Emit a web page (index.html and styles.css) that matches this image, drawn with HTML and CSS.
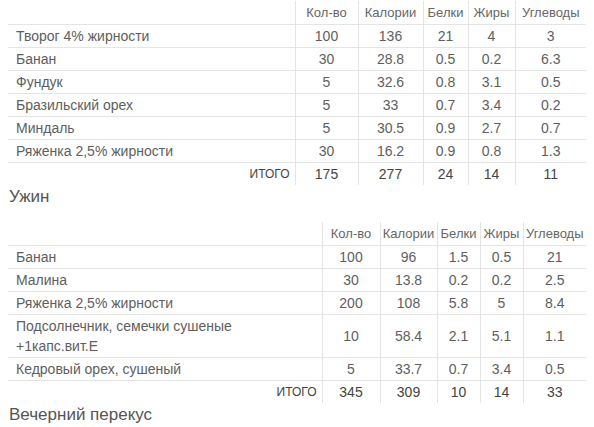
FILE: index.html
```html
<!DOCTYPE html>
<html lang="ru">
<head>
<meta charset="utf-8">
<title>Рацион</title>
<link rel="stylesheet" href="styles.css">
</head>
<body>
<table class="food t1">
  <colgroup>
    <col class="c-name"><col class="c-qty"><col class="c-cal"><col class="c-pro"><col class="c-fat"><col class="c-carb">
  </colgroup>
  <thead>
    <tr><th></th><th>Кол-во</th><th>Калории</th><th>Белки</th><th>Жиры</th><th>Углеводы</th></tr>
  </thead>
  <tbody>
    <tr><td>Творог 4% жирности</td><td>100</td><td>136</td><td>21</td><td>4</td><td>3</td></tr>
    <tr><td>Банан</td><td>30</td><td>28.8</td><td>0.5</td><td>0.2</td><td>6.3</td></tr>
    <tr><td>Фундук</td><td>5</td><td>32.6</td><td>0.8</td><td>3.1</td><td>0.5</td></tr>
    <tr><td>Бразильский орех</td><td>5</td><td>33</td><td>0.7</td><td>3.4</td><td>0.2</td></tr>
    <tr><td>Миндаль</td><td>5</td><td>30.5</td><td>0.9</td><td>2.7</td><td>0.7</td></tr>
    <tr><td>Ряженка 2,5% жирности</td><td>30</td><td>16.2</td><td>0.9</td><td>0.8</td><td>1.3</td></tr>
    <tr class="total"><td>ИТОГО</td><td>175</td><td>277</td><td>24</td><td>14</td><td>11</td></tr>
  </tbody>
</table>
<h3 class="meal">Ужин</h3>
<table class="food t2">
  <colgroup>
    <col class="c-name"><col class="c-qty"><col class="c-cal"><col class="c-pro"><col class="c-fat"><col class="c-carb">
  </colgroup>
  <thead>
    <tr><th></th><th>Кол-во</th><th>Калории</th><th>Белки</th><th>Жиры</th><th>Углеводы</th></tr>
  </thead>
  <tbody>
    <tr><td>Банан</td><td>100</td><td>96</td><td>1.5</td><td>0.5</td><td>21</td></tr>
    <tr><td>Малина</td><td>30</td><td>13.8</td><td>0.2</td><td>0.2</td><td>2.5</td></tr>
    <tr><td>Ряженка 2,5% жирности</td><td>200</td><td>108</td><td>5.8</td><td>5</td><td>8.4</td></tr>
    <tr><td>Подсолнечник, семечки сушеные<br>+1капс.вит.Е</td><td>10</td><td>58.4</td><td>2.1</td><td>5.1</td><td>1.1</td></tr>
    <tr><td>Кедровый орех, сушеный</td><td>5</td><td>33.7</td><td>0.7</td><td>3.4</td><td>0.5</td></tr>
    <tr class="total"><td>ИТОГО</td><td>345</td><td>309</td><td>10</td><td>14</td><td>33</td></tr>
  </tbody>
</table>
<h3 class="meal">Вечерний перекус</h3>
</body>
</html>
```
FILE: styles.css
```css
html, body {
  background: #fff;
}
body {
  margin: 1px 8px 0;
  font-family: "Liberation Sans", Arial, sans-serif;
  font-size: 14px;
  color: #5e5e5e;
}
.food {
  width: 100%;
  border-collapse: collapse;
  table-layout: fixed;
}
.food th,
.food td {
  padding: 1px 2px;
  line-height: 20px;
  text-align: center;
  vertical-align: middle;
  border-left: 1px solid #e4e4e4;
  white-space: nowrap;
}
.food th:first-child,
.food td:first-child {
  border-left: none;
}
.food th {
  font-weight: normal;
  font-size: 13px;
  padding-top: 2px;
  padding-bottom: 1px;
  color: #666;
  border-bottom: 1px solid #e4e4e4;
}
.food td:first-child {
  text-align: left;
  padding-left: 8px;
}
.food tbody tr {
  border-bottom: 1px solid #e4e4e4;
}
.food tbody tr.total {
  border-bottom: none;
}
.food tr.total td {
  color: #444;
}
.food tr.total td:first-child {
  text-align: right;
  padding-right: 5px;
  font-size: 12px;
}
.t1 .c-name { width: 287px; }
.t1 .c-qty { width: 63px; }
.t1 .c-cal { width: 65px; }
.t1 .c-pro { width: 45px; }
.t1 .c-fat { width: 47px; }
.t1 .c-carb { width: 71px; }
.t2 .c-name { width: 314px; }
.t2 .c-qty { width: 58px; }
.t2 .c-cal { width: 57px; }
.t2 .c-pro { width: 43px; }
.t2 .c-fat { width: 43px; }
.t2 .c-carb { width: 63px; }
.meal {
  margin: 2px 0 15px 1px;
  font-size: 17px;
  line-height: 20px;
  font-weight: normal;
  color: #555;
}
```
